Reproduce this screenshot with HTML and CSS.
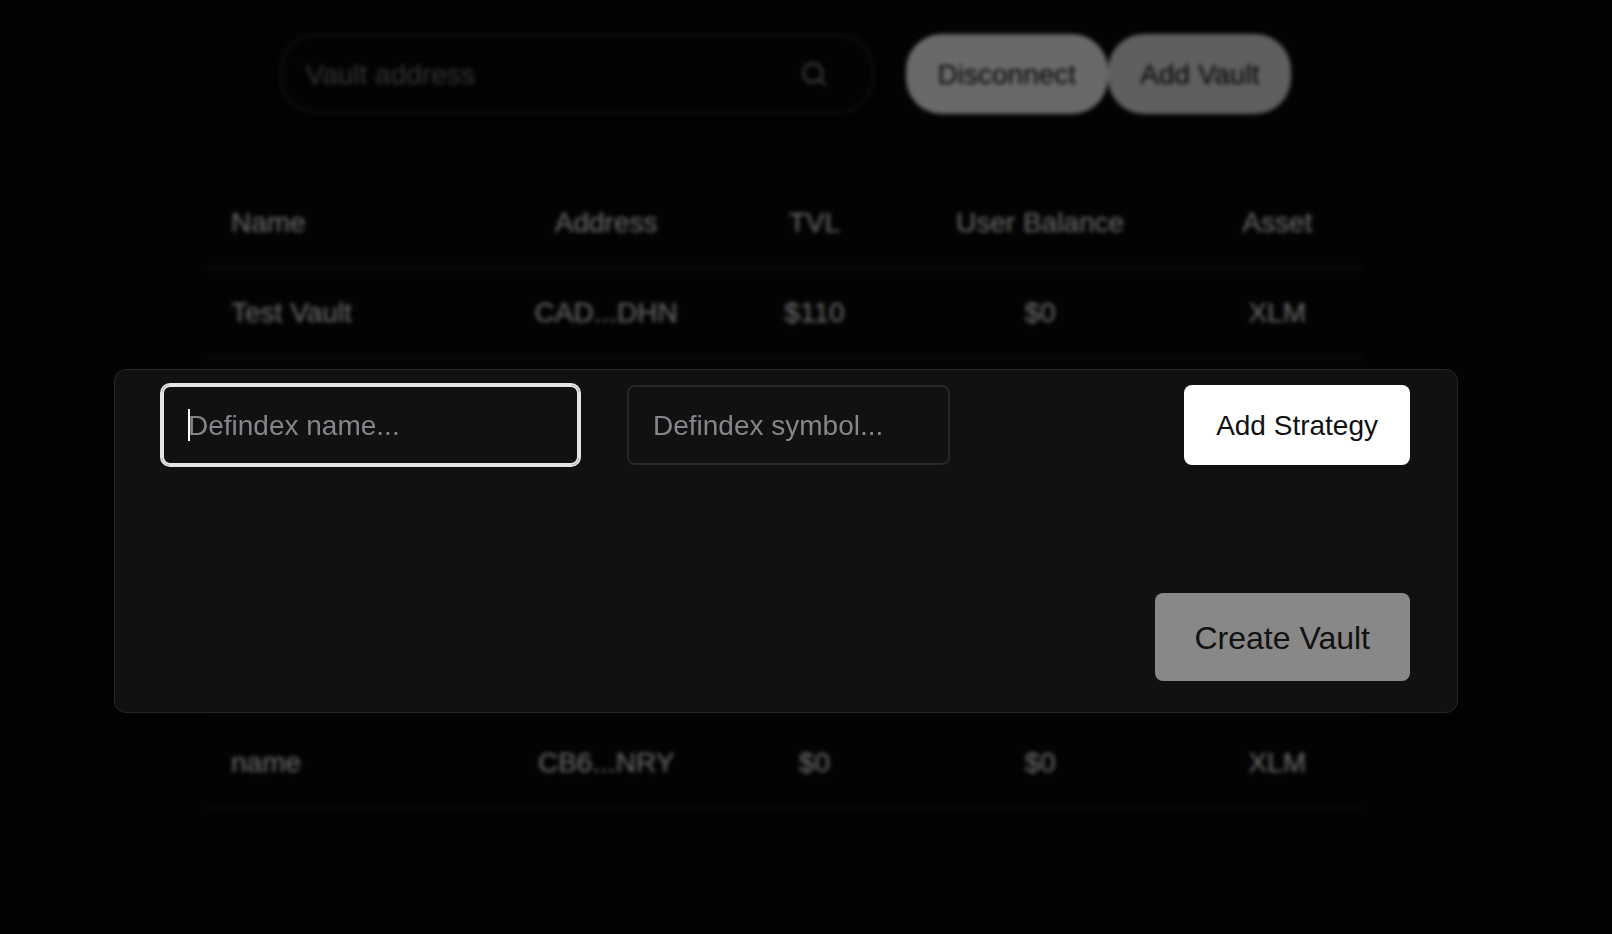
FILE: index.html
```html
<!DOCTYPE html>
<html lang="en">
<head>
<meta charset="utf-8">
<meta name="viewport" content="width=device-width, initial-scale=1">
<title>Vaults</title>
<link rel="stylesheet" href="styles.css">
</head>
<body>
<main class="page">
  <div class="toolbar">
    <form class="search">
      <input class="search-input" type="search" placeholder="Vault address" aria-label="Vault address">
      <button class="search-button" type="button" aria-label="Search">
        <svg class="search-icon" viewBox="0 0 24 24" fill="none" stroke="currentColor" stroke-width="2" stroke-linecap="round" stroke-linejoin="round"><circle cx="11" cy="11" r="8"/><path d="m21 21-4.3-4.3"/></svg>
      </button>
    </form>
    <div class="actions">
      <button class="pill" type="button">Disconnect</button>
      <button class="pill pill-dim" type="button">Add Vault</button>
    </div>
  </div>
  <table class="vaults">
    <colgroup><col class="col-name"><col class="col-address"><col class="col-tvl"><col class="col-balance"><col class="col-asset"></colgroup>
    <thead>
      <tr><th>Name</th><th>Address</th><th>TVL</th><th>User Balance</th><th>Asset</th></tr>
    </thead>
    <tbody>
      <tr><td>Test Vault</td><td>CAD...DHN</td><td>$110</td><td>$0</td><td>XLM</td></tr>
      <tr><td></td><td></td><td></td><td></td><td></td></tr>
      <tr><td></td><td></td><td></td><td></td><td></td></tr>
      <tr><td></td><td></td><td></td><td></td><td></td></tr>
      <tr><td></td><td></td><td></td><td></td><td></td></tr>
      <tr><td>name</td><td>CB6...NRY</td><td>$0</td><td>$0</td><td>XLM</td></tr>
    </tbody>
  </table>
</main>
<div class="overlay">
  <form class="dialog" role="dialog" aria-modal="true" aria-label="Create Vault">
    <div class="fields">
      <div class="field field-name">
        <input class="input input-active" type="text" placeholder="Defindex name..." aria-label="Defindex name">
      </div>
      <div class="field field-symbol">
        <input class="input" type="text" placeholder="Defindex symbol..." aria-label="Defindex symbol">
      </div>
      <button class="button" type="button">Add Strategy</button>
    </div>
    <div class="footer">
      <button class="button button-large" type="button">Create Vault</button>
    </div>
  </form>
</div>
</body>
</html>
```
FILE: styles.css
```css
* { box-sizing: border-box; }

body {
  margin: 0;
  min-height: 100vh;
  background: #080808;
  color: #fff;
  font-family: "Liberation Sans", Arial, sans-serif;
  font-size: 28px;
  line-height: 40px;
}

button, input { font: inherit; }
button { border: 0; cursor: pointer; }

.page { padding: 34px 248px 40px 207px; }

.toolbar {
  display: flex;
  justify-content: center;
  gap: 32px;
}

.search {
  display: flex;
  align-items: center;
  flex: 0 1 594px;
  min-width: 0;
  height: 80px;
  padding: 0 44px 0 24px;
  border: 2px solid #303033;
  border-radius: 36px;
  box-shadow: 0 4px 12px #000;
}

.search-input {
  flex: 1;
  min-width: 0;
  padding: 2px 0 0;
  border: 0;
  outline: 0;
  background: none;
  color: #fafafa;
}

.search-input::placeholder { color: #7c7c85; opacity: 1; }

.search-button {
  display: flex;
  padding: 0;
  background: none;
  color: #a1a1aa;
}

.search-icon { width: 28px; height: 28px; }

.actions { display: flex; }

.pill {
  height: 80px;
  padding: 2px 32px 0;
  border-radius: 36px;
  background: #fff;
  color: #111;
  white-space: nowrap;
}

.pill-dim { background: #e6e6e6; }

.vaults {
  width: 100%;
  margin-top: 64px;
  border-collapse: collapse;
  table-layout: fixed;
}

.col-name, .col-address { width: 23%; }
.col-tvl { width: 13%; }
.col-balance { width: 26%; }
.col-asset { width: 15%; }

.vaults th, .vaults td {
  height: 90px;
  padding: 0 24px;
  border-bottom: 2px solid #27272a;
  font-weight: 400;
  text-align: center;
  white-space: nowrap;
}

.vaults th:first-child, .vaults td:first-child { text-align: left; }

.overlay {
  position: fixed;
  inset: 0;
  padding: 369px 154px 40px 114px;
  background: rgba(0, 0, 0, 0.59);
  backdrop-filter: blur(2px);
}

.dialog {
  display: flex;
  flex-direction: column;
  gap: 128px;
  padding: 15px 47px 31px;
  border: 1px solid #27272a;
  border-radius: 12px;
  background: #111;
  box-shadow: 0 12px 24px rgba(0, 0, 0, 0.6);
}

.fields {
  display: flex;
  gap: 48px;
}

.field { position: relative; min-width: 0; }
.field-name { flex: 0 1 417px; }
.field-symbol { flex: 0 1 323px; }

.input {
  display: block;
  width: 100%;
  height: 80px;
  padding: 2px 24px 0;
  border: 2px solid #27272a;
  border-radius: 8px;
  outline: 0;
  background: transparent;
  color: #fafafa;
}

.input::placeholder { color: #85858c; opacity: 1; }

.input-active {
  border-color: #e5e5e5;
  box-shadow: 0 0 0 2px #e5e5e5;
}

/* text caret of the active field */
.field-name::after {
  content: "";
  position: absolute;
  top: 24px;
  left: 26px;
  width: 2px;
  height: 32px;
  background: #fff;
}

.button {
  height: 80px;
  margin-left: auto;
  padding: 2px 32px 0;
  border-radius: 8px;
  background: #fff;
  color: #111;
  white-space: nowrap;
}

.footer { display: flex; }

.button-large {
  height: 88px;
  padding: 2px 40px 0;
  background: #888;
  font-size: 32px;
}
```
